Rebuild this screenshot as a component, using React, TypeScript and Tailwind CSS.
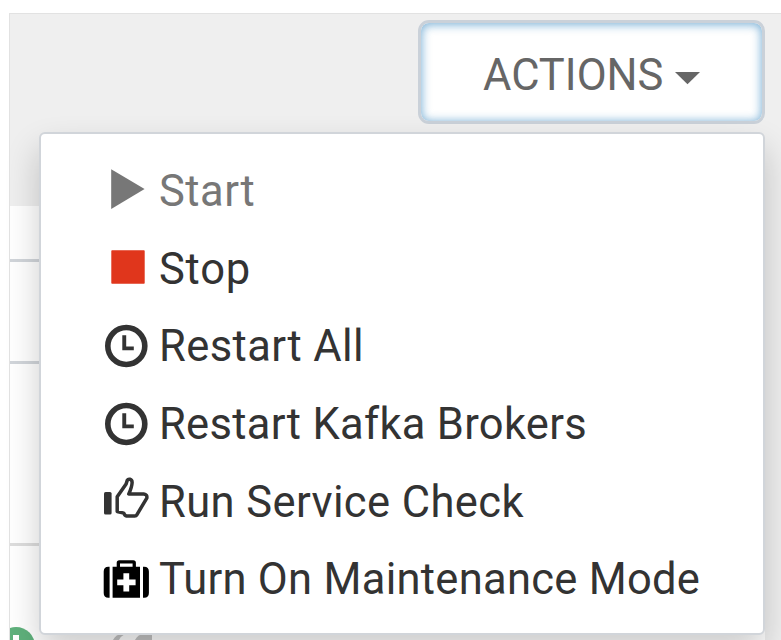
import React from "react";

function PlayIcon() {
  return (
    <svg width="50" height="50" viewBox="0 0 50 50" className="block">
      <path d="M11.2 3.3 44.6 23.1 11.2 43z" fill="#777" />
    </svg>
  );
}

function StopIcon() {
  return (
    <svg width="50" height="50" viewBox="0 0 50 50" className="block">
      <rect x="11.3" y="6.3" width="33.4" height="33.4" rx="0.8" fill="#e0361c" />
    </svg>
  );
}

function ClockIcon() {
  return (
    <svg width="50" height="50" viewBox="0 0 50 50" className="block">
      <circle cx="26.3" cy="25" r="18.5" fill="none" stroke="#333" strokeWidth="5.6" />
      <path d="M22.3 14.2h3.9v11.2h7.6v3.9H22.3z" fill="#333" />
    </svg>
  );
}

function ThumbIcon() {
  return (
    <svg width="50" height="50" viewBox="0 0 50 50" className="block">
      <rect x="4" y="15" width="7.6" height="22.6" rx="1.6" fill="#333" />
      <path
        transform="translate(0 -0.5)"
        d="M17.2 20.2 26.1 7.5 27.2 3.9Q28.1 2.3 30 2.8Q32.2 3.4 32.1 6.3Q31.9 10.6 28.8 17.5H43.8Q47.5 17.9 46.8 21.7L36.8 38.3Q36.2 39.4 34.7 39.4H26.5Q24.7 39.1 23.8 36.6L17.2 35z"
        fill="none"
        stroke="#333"
        strokeWidth="3.5"
        strokeLinejoin="round"
      />
    </svg>
  );
}

function MedkitIcon() {
  return (
    <svg width="50" height="50" viewBox="0 0 50 50" className="block">
      <g transform="translate(0 1.5)">
        <path d="M9.6 11.2v31.1H8.4Q3.7 42.3 3.7 37.5V16Q3.7 11.2 8.4 11.2zM43 11.2v31.1h1.2Q48.9 42.3 48.9 37.5V16Q48.9 11.2 44.2 11.2z" fill="#000" />
        <path fillRule="evenodd" d="M12.6 11.2h4.1V7.3q0-2.6 2.6-2.6h14q2.6 0 2.6 2.6v3.9h4.1v31.1H12.6zM20 8v3.2h12.6V8zM23.4 17.8v6.1h-6.2v5.8h6.2v6.3h5.8v-6.3h6.4v-5.8h-6.4v-6.1z" fill="#000" />
      </g>
    </svg>
  );
}

const items = [
  { label: "Start", icon: <PlayIcon />, text: "text-[#777] tracking-[0.5px]" },
  { label: "Stop", icon: <StopIcon />, text: "text-[#333] tracking-[0.75px]" },
  { label: "Restart All", icon: <ClockIcon />, text: "text-[#333] tracking-[0.4px]" },
  { label: "Restart Kafka Brokers", icon: <ClockIcon />, text: "text-[#333] tracking-[0.3px]" },
  { label: "Run Service Check", icon: <ThumbIcon />, text: "text-[#333] tracking-[0.4px]" },
  { label: "Turn On Maintenance Mode", icon: <MedkitIcon />, text: "text-[#333] tracking-[0.28px]" },
];

function Menu() {
  return (
    <ul className="absolute left-[39px] top-[132px] flex h-[503px] w-[726px] flex-col rounded-[6px] border-[2.5px] border-[#d1d5da] bg-white pt-[18px] shadow-[0_17px_34px_rgba(0,0,0,0.2)]">
      {items.map((item) => (
        <li key={item.label} className="flex h-[77.7px] shrink-0 items-center pl-[59px]">
          <span className="w-[59px] shrink-0">{item.icon}</span>
          <span className={`whitespace-nowrap pt-[2px] text-[43.5px] leading-[60px] ${item.text}`}>{item.label}</span>
        </li>
      ))}
    </ul>
  );
}

export default function App() {
  return (
    <div className="relative h-[640px] w-[781px] overflow-hidden bg-white pl-[9px] pt-[13px] font-['Roboto','Liberation_Sans',sans-serif]">
      <div className="flex h-[627px] border-l border-t border-[#e2e2e2] bg-[#efefef]">
        <div className="flex w-[755px] flex-col">
          <div className="h-[192px] shrink-0" />
          <div className="h-[56px] shrink-0 border-b-[3px] border-[#d1d5da] bg-white" />
          <div className="h-[102px] shrink-0 border-b-[3px] border-[#d1d5da] bg-white" />
          <div className="h-[182px] shrink-0 border-b-[3px] border-[#dddddd] bg-white" />
          <div className="flex grow items-start bg-white pt-[80px]">
            <svg width="160" height="14" viewBox="0 0 160 14" className="shrink-0">
              <circle cx="6" cy="20" r="19" fill="#5fb17c" />
              <path d="M3 9h6v5H3z" fill="#fff" />
              <path d="M103 14q3-6 9-6h3q-4 2-6 6zM125 14q3-6 9-6h8v6z" fill="#c4c4c4" />
            </svg>
          </div>
        </div>
      </div>
      <button className="absolute left-[418px] top-[20px] flex h-[104px] w-[347px] items-center rounded-[11px] border-[3px] border-[#cad1d9] bg-white pl-[62px] pt-[8px] text-[43.5px] leading-[60px] text-[#666] shadow-[inset_0_1px_10px_1px_rgba(60,140,195,0.65)]">
        <span className="w-[192px] shrink-0 whitespace-nowrap text-left">ACTIONS</span>
        <svg width="26" height="14" viewBox="0 0 26 14" className="mt-[5px]">
          <path d="M0 0h25L12.5 12.3z" fill="#666" />
        </svg>
      </button>
      <Menu />
    </div>
  );
}
